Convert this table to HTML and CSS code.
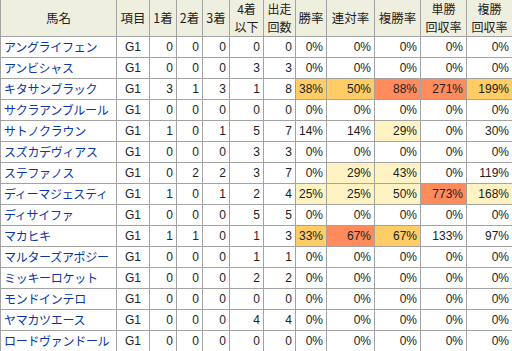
FILE: index.html
```html
<!DOCTYPE html>
<html lang="ja">
<head>
<meta charset="utf-8">
<link rel="stylesheet" href="styles.css">
</head>
<body>
<table class="stats">
  <colgroup>
    <col class="c-name"><col class="c-item"><col class="c-n1"><col class="c-n2"><col class="c-n3"><col class="c-n4"><col class="c-runs"><col class="c-win"><col class="c-ren"><col class="c-fuku"><col class="c-tan"><col class="c-fk">
  </colgroup>
  <thead>
    <tr>
      <th>馬名</th><th>項目</th><th>1着</th><th>2着</th><th>3着</th><th><span class="ln">4着</span><span class="ln">以下</span></th><th><span class="ln">出走</span><span class="ln">回数</span></th><th>勝率</th><th>連対率</th><th>複勝率</th><th><span class="ln">単勝</span><span class="ln">回収率</span></th><th><span class="ln">複勝</span><span class="ln">回収率</span></th>
    </tr>
  </thead>
  <tbody>
    <tr><td class="name">アングライフェン</td><td class="item">G1</td><td>0</td><td>0</td><td>0</td><td>0</td><td>0</td><td>0%</td><td>0%</td><td>0%</td><td>0%</td><td>0%</td></tr>
    <tr><td class="name">アンビシャス</td><td class="item">G1</td><td>0</td><td>0</td><td>0</td><td>3</td><td>3</td><td>0%</td><td>0%</td><td>0%</td><td>0%</td><td>0%</td></tr>
    <tr><td class="name">キタサンブラック</td><td class="item">G1</td><td>3</td><td>1</td><td>3</td><td>1</td><td>8</td><td class="hi1">38%</td><td class="hi1">50%</td><td class="hi2">88%</td><td class="hi2">271%</td><td class="hi1">199%</td></tr>
    <tr><td class="name">サクラアンブルール</td><td class="item">G1</td><td>0</td><td>0</td><td>0</td><td>0</td><td>0</td><td>0%</td><td>0%</td><td>0%</td><td>0%</td><td>0%</td></tr>
    <tr><td class="name">サトノクラウン</td><td class="item">G1</td><td>1</td><td>0</td><td>1</td><td>5</td><td>7</td><td>14%</td><td>14%</td><td class="hi3">29%</td><td>0%</td><td>30%</td></tr>
    <tr><td class="name">スズカデヴィアス</td><td class="item">G1</td><td>0</td><td>0</td><td>0</td><td>3</td><td>3</td><td>0%</td><td>0%</td><td>0%</td><td>0%</td><td>0%</td></tr>
    <tr><td class="name">ステファノス</td><td class="item">G1</td><td>0</td><td>2</td><td>2</td><td>3</td><td>7</td><td>0%</td><td class="hi3">29%</td><td class="hi3">43%</td><td>0%</td><td>119%</td></tr>
    <tr><td class="name">ディーマジェスティ</td><td class="item">G1</td><td>1</td><td>0</td><td>1</td><td>2</td><td>4</td><td class="hi3">25%</td><td class="hi3">25%</td><td class="hi3">50%</td><td class="hi2">773%</td><td class="hi3">168%</td></tr>
    <tr><td class="name">ディサイファ</td><td class="item">G1</td><td>0</td><td>0</td><td>0</td><td>5</td><td>5</td><td>0%</td><td>0%</td><td>0%</td><td>0%</td><td>0%</td></tr>
    <tr><td class="name">マカヒキ</td><td class="item">G1</td><td>1</td><td>1</td><td>0</td><td>1</td><td>3</td><td class="hi1">33%</td><td class="hi2">67%</td><td class="hi1">67%</td><td>133%</td><td>97%</td></tr>
    <tr><td class="name">マルターズアポジー</td><td class="item">G1</td><td>0</td><td>0</td><td>0</td><td>1</td><td>1</td><td>0%</td><td>0%</td><td>0%</td><td>0%</td><td>0%</td></tr>
    <tr><td class="name">ミッキーロケット</td><td class="item">G1</td><td>0</td><td>0</td><td>0</td><td>2</td><td>2</td><td>0%</td><td>0%</td><td>0%</td><td>0%</td><td>0%</td></tr>
    <tr><td class="name">モンドインテロ</td><td class="item">G1</td><td>0</td><td>0</td><td>0</td><td>0</td><td>0</td><td>0%</td><td>0%</td><td>0%</td><td>0%</td><td>0%</td></tr>
    <tr><td class="name">ヤマカツエース</td><td class="item">G1</td><td>0</td><td>0</td><td>0</td><td>4</td><td>4</td><td>0%</td><td>0%</td><td>0%</td><td>0%</td><td>0%</td></tr>
    <tr><td class="name">ロードヴァンドール</td><td class="item">G1</td><td>0</td><td>0</td><td>0</td><td>0</td><td>0</td><td>0%</td><td>0%</td><td>0%</td><td>0%</td><td>0%</td></tr>
  </tbody>
</table>
</body>
</html>
```
FILE: styles.css
```css
html, body {
  margin: 0;
  padding: 0;
  overflow: hidden;
  background: #ffffff;
}

.stats {
  border-collapse: separate;
  border-spacing: 0;
  table-layout: fixed;
  width: 513px;
  border-left: 1px solid #a3a3a3;
  font-family: "Liberation Sans", "Noto Sans CJK JP", sans-serif;
  font-size: 12px;
  color: #222222;
}

.c-name { width: 116px; }
.c-item { width: 33px; }
.c-n1 { width: 27px; }
.c-n2 { width: 26px; }
.c-n3 { width: 27px; }
.c-n4 { width: 34px; }
.c-runs { width: 32px; }
.c-win { width: 31px; }
.c-ren { width: 48px; }
.c-fuku { width: 46px; }
.c-tan { width: 46px; }
.c-fk { width: 46px; }

.stats th,
.stats td {
  box-sizing: border-box;
  border-right: 1px solid #a3a3a3;
  border-bottom: 1px solid #a3a3a3;
  padding: 0 3px 0 0;
  white-space: nowrap;
  overflow: hidden;
}

.stats th {
  height: 37px;
  background: #efefdf;
  font-weight: normal;
  font-family: "Noto Sans CJK JP", sans-serif;
  font-size: 12.5px;
  line-height: 18px;
  text-align: center;
  padding: 0;
  color: #222222;
}

.stats th .ln {
  display: block;
  height: 18px;
  line-height: 18px;
  font-size: 12px;
}

.stats td {
  height: 21px;
  line-height: 20px;
  text-align: right;
}

.stats td.name {
  text-align: left;
  padding-left: 3px;
  color: #0a35a8;
  font-family: "Noto Sans CJK JP", sans-serif;
  letter-spacing: -0.3px;
}

.stats td.item {
  text-align: center;
  padding: 0;
}

.hi1 { background: #ffcc66; }
.hi2 { background: #ff8a5c; }
.hi3 { background: #fff3c4; }
```
